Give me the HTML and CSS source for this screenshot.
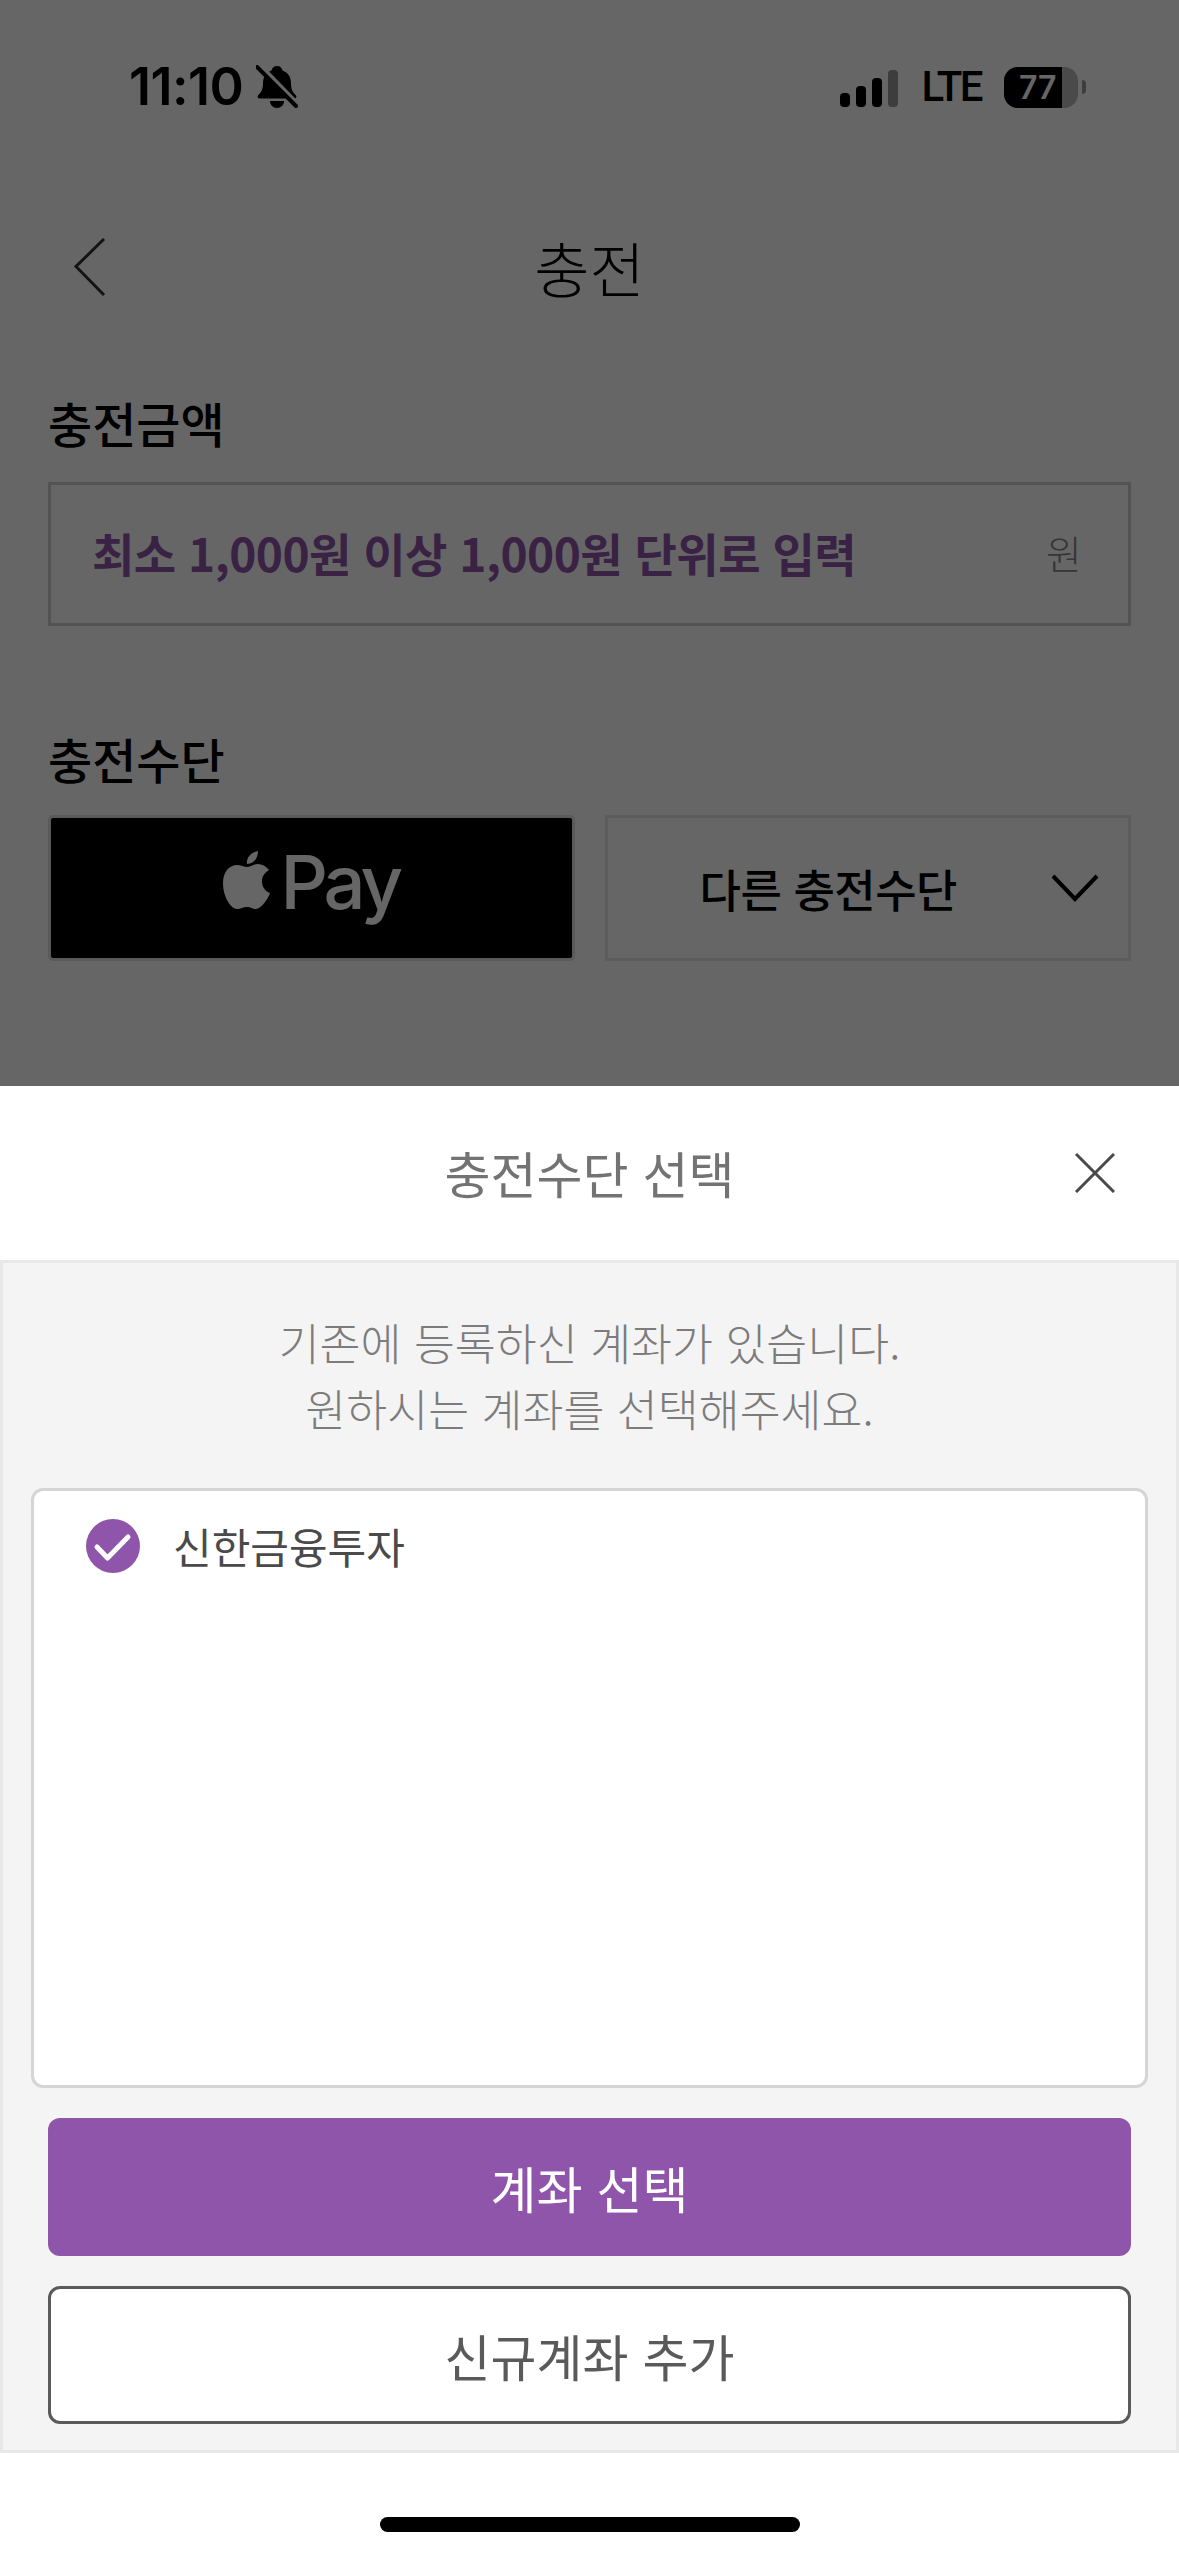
FILE: index.html
```html
<!DOCTYPE html>
<html lang="ko">
<head>
    <meta charset="UTF-8">
    <meta name="viewport" content="width=device-width, initial-scale=1.0">
    <title>충전</title>
    <link rel="stylesheet" href="styles.css">
</head>
<body>
    <div class="page">
        <div class="status">
            <div class="status-left">
                <span class="time">11:10</span>
                <svg class="bell" width="42" height="44" viewBox="0 0 42 44">
                    <path d="M21 1c3 0 5 2 5.500 4.500c6 2 8.500 7 8.500 13c0 6 2 9 5 12c1 2 0 3-2 3H4c-2 0-3-1-2-3c3-3 5-6 5-12c0-6 2.500-11 8.500-13C16 3 18 1 21 1z"/>
                    <path d="M14 36h14c0 4-3 7-7 7s-7-3-7-7z"/>
                    <path class="bell-gap" d="M4 0L42 39"/>
                    <path class="bell-slash" d="M1 2L40 41"/>
                </svg>
            </div>
            <div class="status-right">
                <div class="signal">
                    <i class="bar bar1"></i>
                    <i class="bar bar2"></i>
                    <i class="bar bar3"></i>
                    <i class="bar bar4"></i>
                </div>
                <span class="lte">LTE</span>
                <div class="battery">
                    <div class="battery-fill">77</div>
                </div>
                <i class="battery-nub"></i>
            </div>
        </div>

        <div class="header">
            <svg class="back" width="32" height="58" viewBox="0 0 32 58">
                <path d="M30 1L2 28.500L30 57"/>
            </svg>
            <h1 class="title">충전</h1>
        </div>

        <div class="form">
            <div class="label">충전금액</div>
            <div class="amount">
                <span class="placeholder">최소 1,000원 이상 1,000원 단위로 입력</span>
                <span class="unit">원</span>
            </div>
            <div class="label label-method">충전수단</div>
            <div class="methods">
                <div class="method apple">
                    <svg class="apple-logo" width="47" height="59" viewBox="0 0 47 59">
                        <path d="M35 0C28 1 23 7 24 13C31 13 35 7 35 0z"/>
                        <path d="M24 16C27 16 30 13 35 13C39 13 43 15 46 19C41 22 39 26 39 30C39 36 42 40 47 42C45 48 38 58 33 58C29 58 28 56 24 56C20 56 18 58 14 58C8 58 0 46 0 32C0 20 7 14 14 14C18 14 21 16 24 16z"/>
                    </svg>
                    <span class="pay">Pay</span>
                </div>
                <div class="method other">
                    <span class="other-text">다른 충전수단</span>
                    <svg class="caret" width="48" height="28" viewBox="0 0 48 28">
                        <path d="M2 2L24 25L46 2"/>
                    </svg>
                </div>
            </div>
        </div>
    </div>

    <div class="sheet">
        <div class="sheet-head">
            <h2 class="sheet-title">충전수단 선택</h2>
            <svg class="close" width="40" height="40" viewBox="0 0 40 40">
                <path d="M1 1L39 39M39 1L1 39"/>
            </svg>
        </div>
        <div class="panel">
            <p class="notice">기존에 등록하신 계좌가 있습니다.<br>원하시는 계좌를 선택해주세요.</p>
            <div class="accounts">
                <div class="account">
                    <svg class="check" width="54" height="54" viewBox="0 0 54 54">
                        <circle cx="27" cy="27" r="27"/>
                        <path d="M11 28L21.500 39L42 18"/>
                    </svg>
                    <span class="account-name">신한금융투자</span>
                </div>
            </div>
            <div class="actions">
                <button class="btn btn-primary">계좌 선택</button>
                <button class="btn btn-outline">신규계좌 추가</button>
            </div>
        </div>
        <div class="home-area">
            <div class="home-bar"></div>
        </div>
    </div>
</body>
</html>
```

FILE: styles.css
```css
* {
    box-sizing: border-box;
}
body {
    margin: 0;
    width: 1179px;
    height: 2556px;
    overflow: hidden;
    background-color: #fff;
    font-family: "Noto Sans CJK KR", "Noto Sans", sans-serif;
    color: #000;
}
h1, h2, p {
    margin: 0;
    font-weight: 400;
}

/* dimmed page behind the sheet */
.page {
    position: relative;
    height: 1086px;
    padding: 0 48px;
    background-color: #fff;
}
.page::after {
    content: "";
    position: absolute;
    inset: 0;
    background-color: rgba(0, 0, 0, 0.6);
}

.status {
    display: flex;
    justify-content: space-between;
    align-items: center;
    height: 120px;
    padding: 54px 0 0 81px;
}
.status-left {
    display: flex;
    align-items: center;
    gap: 13px;
}
.time {
    font-family: Inter, sans-serif;
    font-size: 52px;
    font-weight: 600;
    letter-spacing: -0.5px;
    line-height: 44px;
}
.bell path {
    fill: #000;
}
.bell .bell-gap {
    fill: none;
    stroke: #fff;
    stroke-width: 4;
}
.bell .bell-slash {
    fill: none;
    stroke: #000;
    stroke-width: 4;
    stroke-linecap: round;
}
.status-right {
    display: flex;
    align-items: center;
    margin-right: 45px;
}
.signal {
    display: flex;
    align-items: flex-end;
    gap: 6px;
    height: 37px;
    margin-top: 3px;
}
.bar {
    display: block;
    width: 10px;
    background-color: #000;
    border-radius: 4px;
}
.bar1 { height: 14px; }
.bar2 { height: 21px; }
.bar3 { height: 29px; }
.bar4 {
    height: 37px;
    background-color: #999;
}
.lte {
    margin-left: 24px;
    font-family: Roboto, sans-serif;
    font-size: 42px;
    font-weight: 500;
    line-height: 44px;
    letter-spacing: -2.500px;
}
.battery {
    width: 74px;
    height: 41px;
    margin-left: 23px;
    border-radius: 14px;
    background-color: #b8b8b8;
    overflow: hidden;
}
.battery-fill {
    width: 58px;
    height: 41px;
    padding-left: 15px;
    background-color: #000;
    color: #fff;
    font-family: Inter, sans-serif;
    font-size: 32px;
    font-weight: 600;
    line-height: 41px;
}
.battery-nub {
    display: block;
    width: 4px;
    height: 14px;
    margin-left: 4px;
    background-color: #999;
    border-radius: 0 4px 4px 0;
}

.header {
    position: relative;
    height: 96px;
    margin-top: 99px;
    display: flex;
    align-items: center;
    justify-content: center;
}
.back {
    position: absolute;
    left: 26px;
    top: 19px;
}
.back path {
    fill: none;
    stroke: #333;
    stroke-width: 3;
}
.title {
    font-size: 60px;
    font-weight: 300;
    line-height: 96px;
}

.form {
    margin-top: 74px;
}
.label {
    font-size: 48px;
    font-weight: 500;
    line-height: 66px;
}
.amount {
    display: flex;
    justify-content: space-between;
    align-items: center;
    height: 144px;
    margin-top: 27px;
    padding: 0 46px 4px 41px;
    border: 3px solid #cfcfcf;
}
.placeholder {
    color: #8f55aa;
    font-size: 46px;
    font-weight: 700;
    letter-spacing: -0.500px;
}
.unit {
    color: #888;
    font-size: 39px;
    font-weight: 300;
}
.label-method {
    margin-top: 99px;
}
.methods {
    display: grid;
    grid-template-columns: 1fr 1fr;
    gap: 30px;
    margin-top: 24px;
}
.method {
    height: 146px;
    display: flex;
    align-items: center;
    justify-content: center;
    border: 3px solid #e6e6e6;
}
.apple {
    gap: 10px;
    background-color: #000;
    border-color: #e0e0e0;
    border-radius: 5px;
}
.apple-logo {
    fill: #fff;
    margin-bottom: 15px;
}
.pay {
    color: #fff;
    font-family: Inter, "Liberation Sans", sans-serif;
    font-size: 74px;
    font-weight: 500;
    letter-spacing: -4px;
    line-height: 80px;
    margin-bottom: 12px;
}
.other {
    position: relative;
    justify-content: flex-start;
    padding-left: 92px;
}
.other-text {
    font-size: 45px;
    font-weight: 500;
    letter-spacing: -0.500px;
}
.caret {
    position: absolute;
    right: 29px;
    top: 56px;
}
.caret path {
    fill: none;
    stroke: #000;
    stroke-width: 4;
}

/* bottom sheet */
.sheet {
    height: 1470px;
    background-color: #fff;
}
.sheet-head {
    position: relative;
    height: 174px;
    padding-bottom: 2px;
    display: flex;
    align-items: center;
    justify-content: center;
}
.sheet-title {
    color: #737373;
    font-size: 50px;
    font-weight: 400;
}
.close {
    position: absolute;
    right: 64px;
    top: 67px;
}
.close path {
    fill: none;
    stroke: #4a4a4a;
    stroke-width: 3;
}
.panel {
    height: 1193px;
    padding: 46px 28px 0;
    background-color: #f4f4f4;
    border: 3px solid #e8e8e8;
}
.notice {
    color: #7c7c7c;
    font-size: 44.500px;
    font-weight: 300;
    line-height: 66px;
    text-align: center;
}
.accounts {
    height: 600px;
    margin-top: 47px;
    padding: 24px 52px;
    background-color: #fff;
    border: 3px solid #d5d5d5;
    border-radius: 12px;
}
.account {
    display: flex;
    align-items: center;
    gap: 33px;
}
.check circle {
    fill: #8f55aa;
}
.check path {
    fill: none;
    stroke: #fff;
    stroke-width: 5;
    stroke-linecap: round;
    stroke-linejoin: round;
}
.account-name {
    color: #4a4a4a;
    font-size: 42px;
}
.actions {
    display: flex;
    flex-direction: column;
    gap: 30px;
    margin-top: 30px;
    padding: 0 17px;
}
.btn {
    height: 138px;
    border-radius: 12px;
    font-family: inherit;
    font-size: 50px;
    font-weight: 400;
}
.btn-primary {
    background-color: #8f55aa;
    border: 0;
    color: #fff;
}
.btn-outline {
    background-color: #fff;
    border: 3px solid #5a5a5a;
    color: #5a5a5a;
}
.home-area {
    display: flex;
    justify-content: center;
    padding-top: 64px;
}
.home-bar {
    width: 420px;
    height: 15px;
    background-color: #000;
    border-radius: 8px;
}
```
